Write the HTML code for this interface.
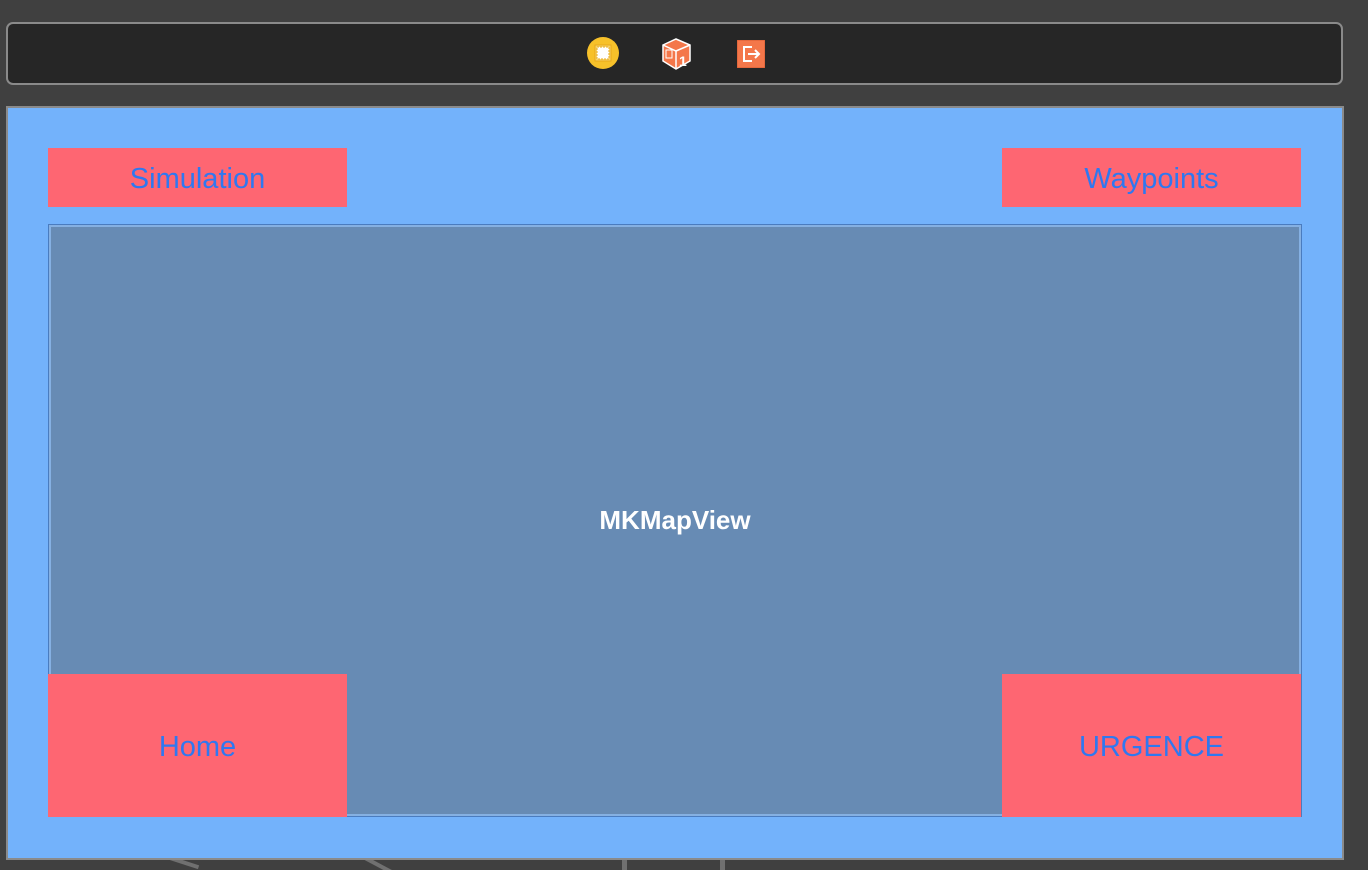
<!DOCTYPE html>
<html style="overflow:hidden;height:870px"><head><style>
body{margin:0;width:1368px;height:870px;background:#404040;position:relative;overflow:hidden;font-family:"Liberation Sans",sans-serif}
.a{position:absolute}
.tb{left:6px;top:22px;width:1333px;height:59px;background:#262626;border:2px solid #8a8a8a;border-radius:7px}
.panel{left:6px;top:106px;width:1334px;height:750px;background:#73b2fb;border:2px solid #8a8a8a}
.map{left:48px;top:224px;width:1252px;height:591px;background:#678bb4;border:1px solid #4a7cbf;box-shadow:inset 0 0 0 2px #85b0e2}
.btn{background:#fe6672;color:#2f78f0;font-size:29px;display:flex;align-items:center;justify-content:center;padding-top:3px;box-sizing:border-box}
</style></head><body>
<div class="a" style="left:140px;top:856px;width:60px;height:4px;background:#707070;transform:rotate(18deg)"></div>
<div class="a" style="left:330px;top:856px;width:70px;height:4px;background:#707070;transform:rotate(28deg)"></div>
<div class="a" style="left:622px;top:858px;width:5px;height:12px;background:#707070"></div>
<div class="a" style="left:720px;top:858px;width:5px;height:12px;background:#707070"></div>
<div class="a tb"></div>
<svg class="a" style="left:586px;top:37px" width="34" height="34"><circle cx="17" cy="16" r="16" fill="#f7c12a"/><rect x="9" y="8" width="16" height="16" fill="#f6d46a" stroke="#e9a91a"/><rect x="11" y="10" width="12" height="12" fill="#fff" stroke="#e9a91a" stroke-dasharray="2 1"/></svg>
<svg class="a" style="left:660px;top:37px" width="34" height="34"><polygon points="3,8 16,2 30,8 30,24 16,32 3,24" fill="#f4774a" stroke="#fff" stroke-width="1.5"/><polyline points="3,8 16,14 30,8" fill="none" stroke="#fff" stroke-width="1.5"/><line x1="16" y1="14" x2="16" y2="32" stroke="#fff" stroke-width="1.5"/><rect x="6" y="13" width="6" height="8" fill="none" stroke="#fff" stroke-width="1"/><text x="19" y="29" font-size="14" font-weight="bold" fill="#fff" font-family="Liberation Sans">1</text></svg>
<svg class="a" style="left:737px;top:40px" width="28" height="28"><rect x="0" y="0" width="28" height="28" fill="#f4774a" stroke="#d35a30"/><path d="M15 7H7V21H15M11 14H22M18 10L22 14L18 18" fill="none" stroke="#fff" stroke-width="2"/></svg>
<div class="a panel"></div>
<div class="a map"></div>
<div class="a" style="left:48px;top:505px;width:1254px;text-align:center;color:#fff;font-weight:bold;font-size:26px">MKMapView</div>
<div class="a btn" style="left:48px;top:148px;width:299px;height:59px">Simulation</div>
<div class="a btn" style="left:1002px;top:148px;width:299px;height:59px">Waypoints</div>
<div class="a btn" style="left:48px;top:674px;width:299px;height:143px">Home</div>
<div class="a btn" style="left:1002px;top:674px;width:299px;height:143px">URGENCE</div>
</body></html>
